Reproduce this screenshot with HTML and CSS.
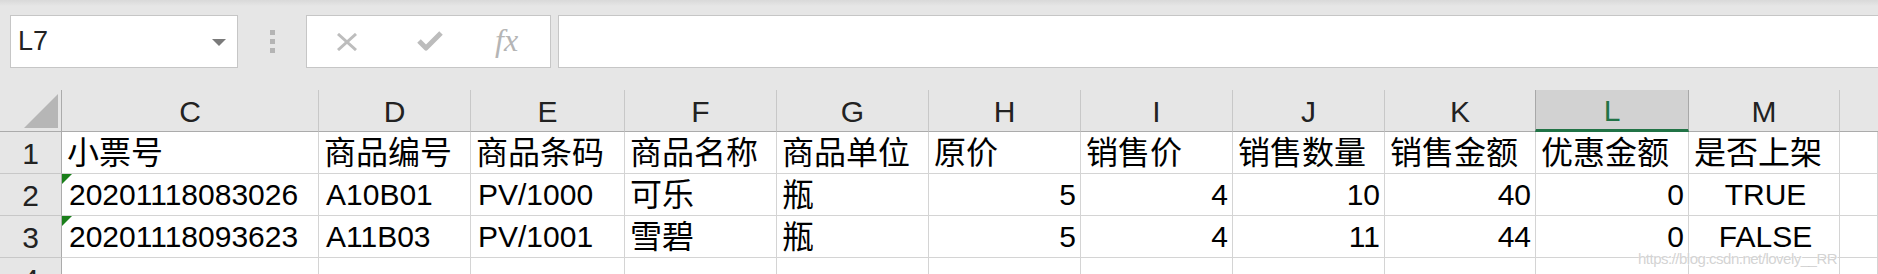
FILE: index.html
```html
<!DOCTYPE html>
<html lang="zh-CN">
<head>
<meta charset="utf-8">
<title>Excel</title>
<link rel="stylesheet" href="styles.css">
</head>
<body>
<div class="app">
  <div class="topbar">
    <div class="namebox">
      <span class="ref">L7</span>
      <span class="caret"></span>
    </div>
    <div class="grip"><i></i><i></i><i></i></div>
    <div class="fnbox">
      <svg class="ico-x" width="22" height="18" viewBox="0 0 22 18"><path d="M2 1 L20 17 M20 1 L2 17" stroke="#bdbdbd" stroke-width="3" fill="none"/></svg>
      <svg class="ico-ok" width="26" height="22" viewBox="0 0 26 22"><path d="M2 11 L9 18 L24 3" stroke="#bcbcbc" stroke-width="5" fill="none" stroke-linejoin="round"/></svg>
      <span class="fx">fx</span>
    </div>
    <div class="formula"></div>
  </div>

  <div class="sheet">
    <div class="corner"><span class="tri"></span></div>
    <div class="ch">C</div><div class="ch">D</div><div class="ch">E</div><div class="ch">F</div><div class="ch">G</div><div class="ch">H</div><div class="ch">I</div><div class="ch">J</div><div class="ch">K</div><div class="ch sel">L</div><div class="ch">M</div><div class="ch last"></div>

    <div class="rh">1</div>
    <div class="c zh">小票号</div><div class="c zh">商品编号</div><div class="c zh">商品条码</div><div class="c zh">商品名称</div><div class="c zh">商品单位</div><div class="c zh">原价</div><div class="c zh">销售价</div><div class="c zh">销售数量</div><div class="c zh">销售金额</div><div class="c zh">优惠金额</div><div class="c zh">是否上架</div><div class="c"></div>

    <div class="rh">2</div>
    <div class="c flag">20201118083026</div><div class="c">A10B01</div><div class="c">PV/1000</div><div class="c zh">可乐</div><div class="c zh">瓶</div><div class="c num">5</div><div class="c num">4</div><div class="c num">10</div><div class="c num">40</div><div class="c num">0</div><div class="c mid">TRUE</div><div class="c"></div>

    <div class="rh">3</div>
    <div class="c flag">20201118093623</div><div class="c">A11B03</div><div class="c">PV/1001</div><div class="c zh">雪碧</div><div class="c zh">瓶</div><div class="c num">5</div><div class="c num">4</div><div class="c num">11</div><div class="c num">44</div><div class="c num">0</div><div class="c mid">FALSE</div><div class="c"></div>

    <div class="rh">4</div>
    <div class="c"></div><div class="c"></div><div class="c"></div><div class="c"></div><div class="c"></div><div class="c"></div><div class="c"></div><div class="c"></div><div class="c"></div><div class="c"></div><div class="c"></div><div class="c"></div>
  </div>

  <div class="watermark">https://blog.csdn.net/lovely__RR</div>
</div>
</body>
</html>
```

FILE: styles.css
```css
html, body {
  margin: 0;
  padding: 0;
  background: #e6e6e6;
  overflow: hidden;
}
.app {
  position: relative;
  width: 1878px;
  height: 274px;
  overflow: hidden;
  font-family: "Liberation Sans", "Noto Sans CJK SC", sans-serif;
  color: #000;
}
.topbar {
  height: 90px;
  box-sizing: border-box;
  padding-top: 15px;
  padding-left: 10px;
  display: flex;
  align-items: flex-start;
  background: linear-gradient(#d9d9d9 0, #e6e6e6 6px, #e6e6e6 100%);
}
.namebox {
  width: 228px;
  height: 53px;
  box-sizing: border-box;
  border: 1px solid #c6c6c6;
  background: #fff;
  display: flex;
  align-items: center;
  padding-left: 7px;
  padding-right: 11px;
}
.ref {
  font-size: 27px;
  color: #222;
  flex: 1;
}
.caret {
  width: 0;
  height: 0;
  border-left: 7px solid transparent;
  border-right: 7px solid transparent;
  border-top: 7px solid #7a7a7a;
  margin-top: 2px;
}
.grip {
  width: 68px;
  height: 53px;
  display: flex;
  flex-direction: column;
  align-items: center;
  justify-content: center;
  gap: 4px;
}
.grip i {
  display: block;
  width: 5px;
  height: 5px;
  background: #b4b4b4;
}
.fnbox {
  width: 245px;
  height: 53px;
  box-sizing: border-box;
  border: 1px solid #c6c6c6;
  background: #fff;
  display: flex;
  align-items: center;
  padding-left: 29px;
}
.ico-x { margin-right: 59px; }
.ico-ok { margin-right: 52px; margin-top: -2px; }
.fx {
  font-family: "Liberation Serif", serif;
  font-style: italic;
  font-size: 32px;
  color: #b5b5b5;
  margin-top: -2px;
}
.formula {
  flex: 1;
  margin-left: 7px;
  height: 53px;
  box-sizing: border-box;
  border: 1px solid #c6c6c6;
  border-right: none;
  background: #fff;
}

.sheet {
  display: grid;
  grid-template-columns: 62px 257px 152px 154px 152px 152px 152px 152px 152px 151px 153px 151px 1fr;
  grid-auto-rows: 42px;
  background: #fff;
}
.corner {
  background: #e6e6e6;
  border-right: 1px solid #ababab;
  border-bottom: 1px solid #ababab;
  position: relative;
}
.tri {
  position: absolute;
  right: 3px;
  bottom: 3px;
  width: 0;
  height: 0;
  border-left: 34px solid transparent;
  border-bottom: 34px solid #b6b6b6;
}
.ch {
  background: #e6e6e6;
  border-right: 1px solid #c8c8c8;
  border-bottom: 1px solid #ababab;
  font-size: 30px;
  color: #222;
  display: flex;
  align-items: center;
  justify-content: center;
  line-height: 1;
  padding-top: 2px;
}
.ch.sel {
  background: #d2d2d2;
  color: #217346;
  border-left: 1px solid #a8a8a8;
  border-right: 1px solid #a8a8a8;
  margin-left: -1px;
  border-bottom: 3px solid #217346;
}
.ch.last { border-right: none; }
.rh {
  background: #e6e6e6;
  border-right: 1px solid #ababab;
  border-bottom: 1px solid #c8c8c8;
  font-size: 30px;
  color: #222;
  display: flex;
  align-items: flex-end;
  justify-content: center;
  line-height: 1;
  padding-bottom: 4px;
  box-sizing: border-box;
}
.c {
  border-right: 1px solid #d4d4d4;
  border-bottom: 1px solid #d4d4d4;
  font-size: 30px;
  line-height: 1;
  display: flex;
  align-items: flex-end;
  padding: 0 4px 5px 7px;
  box-sizing: border-box;
  white-space: nowrap;
  position: relative;
}
.c.zh {
  font-size: 32px;
  padding-bottom: 4px;
  padding-left: 5px;
}
.c.num { justify-content: flex-end; }
.c.mid { justify-content: center; }
.c.flag::before {
  content: "";
  position: absolute;
  left: 0;
  top: 0;
  width: 0;
  height: 0;
  border-top: 10px solid #1a7f1a;
  border-right: 10px solid transparent;
}
.watermark {
  position: absolute;
  left: 1638px;
  top: 250px;
  font-family: "Liberation Sans", sans-serif;
  font-size: 15px;
  letter-spacing: -0.5px;
  color: rgba(200, 200, 200, 0.8);
  text-shadow: 0 0 1px #fff, 1px 1px 0 rgba(255,255,255,0.8);
  white-space: nowrap;
}
```
